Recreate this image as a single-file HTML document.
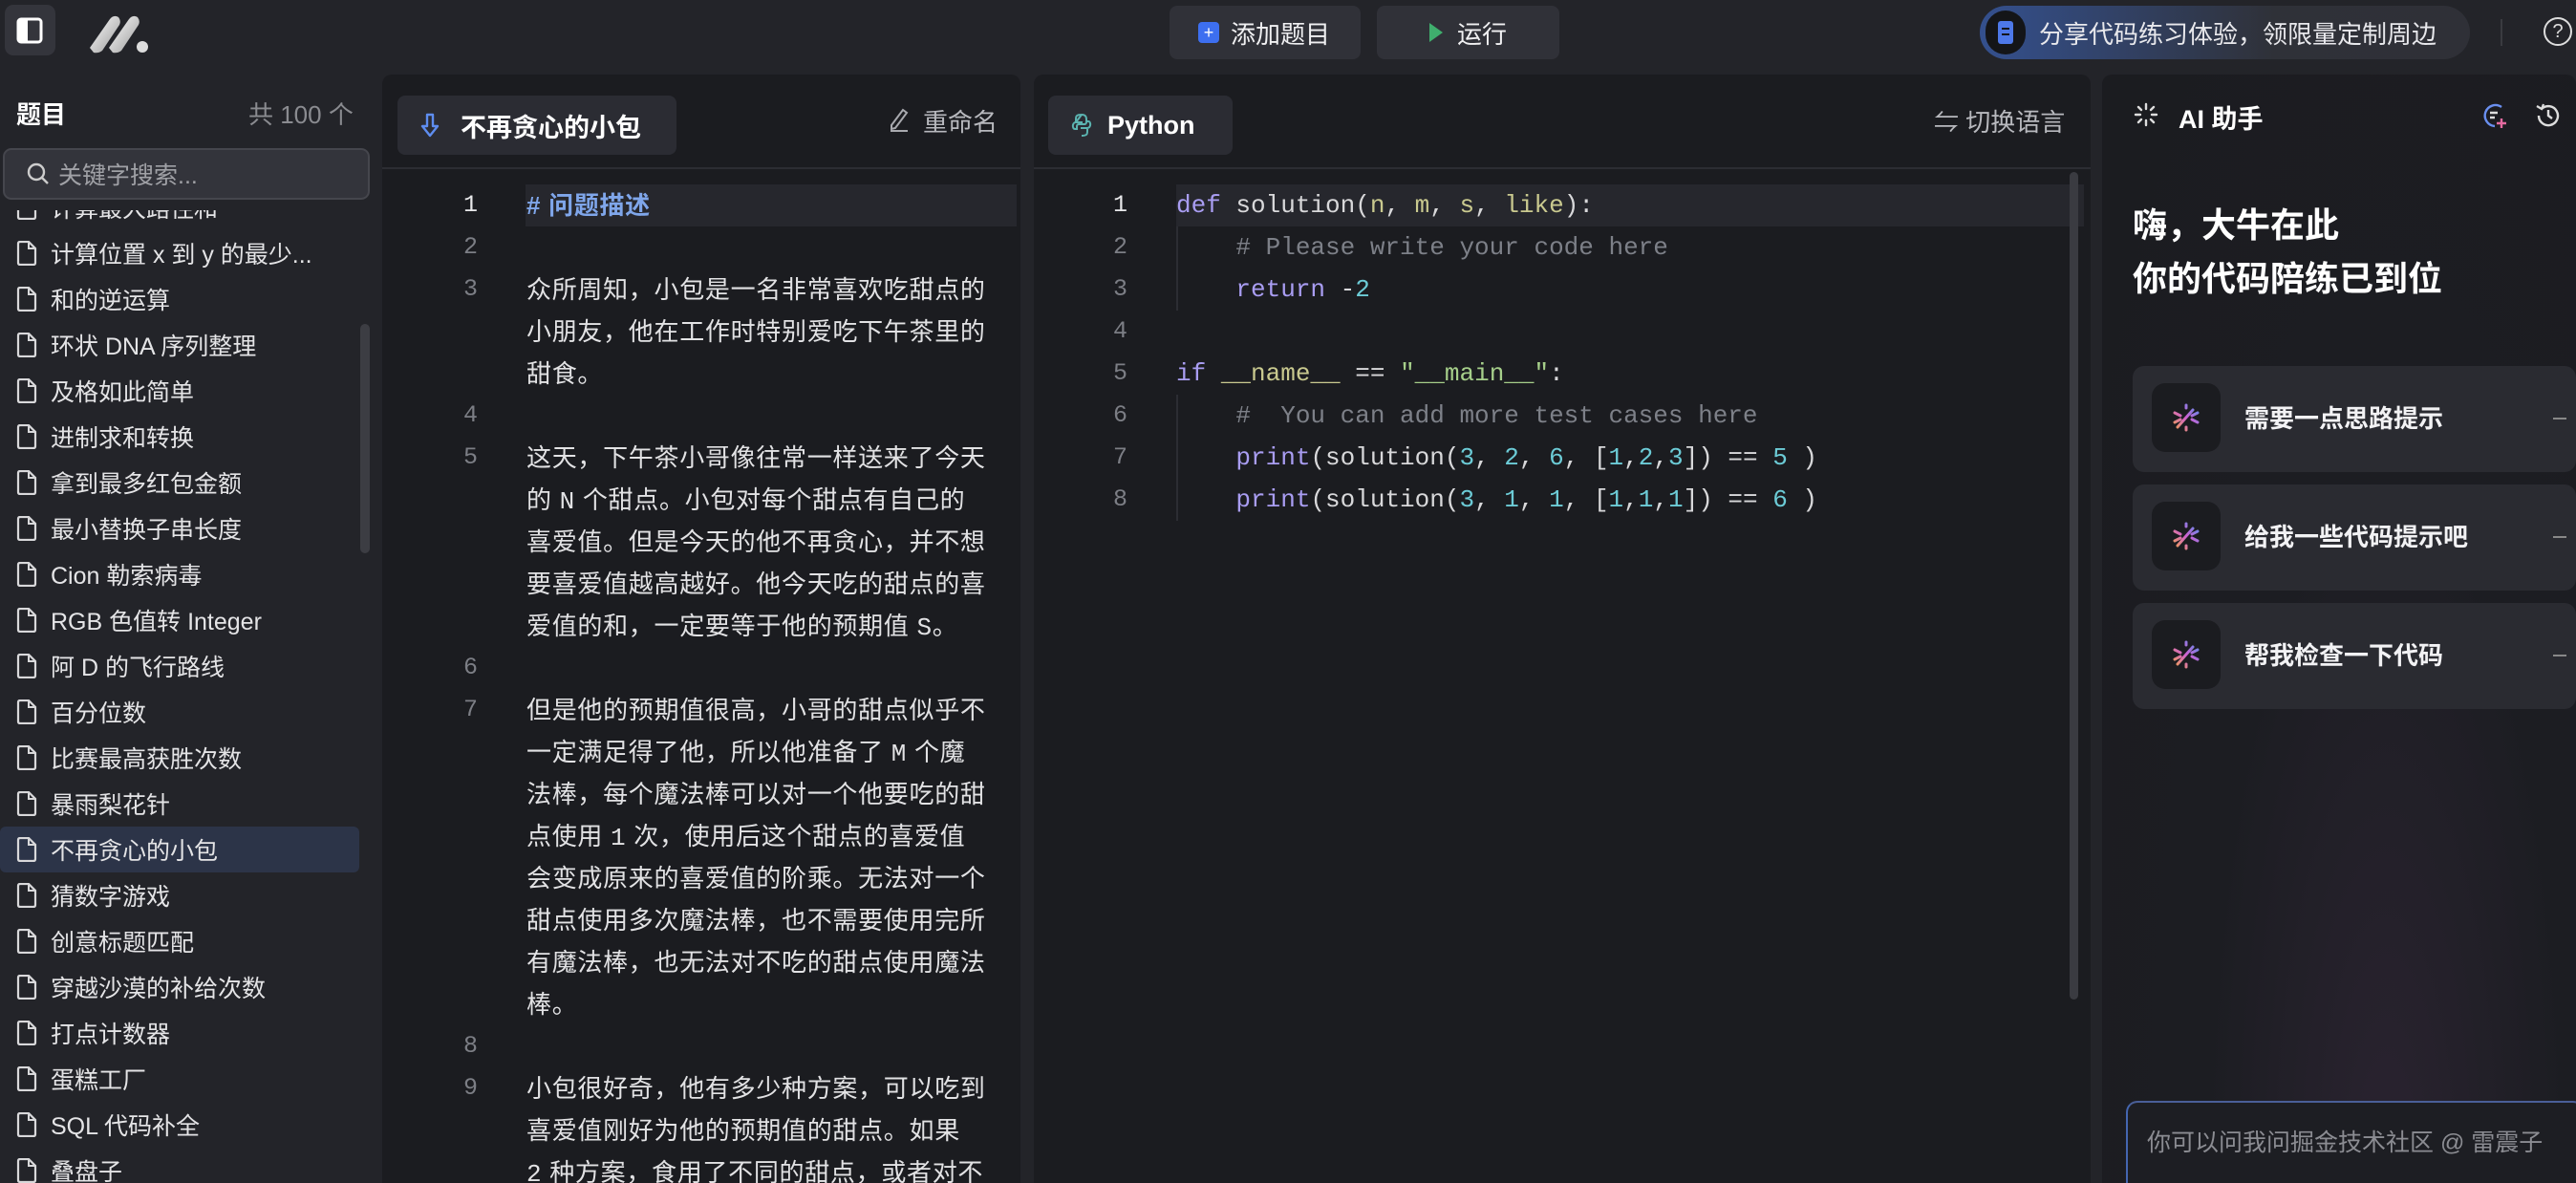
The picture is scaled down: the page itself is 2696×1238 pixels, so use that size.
<!DOCTYPE html>
<html><head><meta charset="utf-8"><style>
*{margin:0;padding:0;box-sizing:border-box}
html{width:2696px;height:1238px;overflow:hidden}
body{width:2696px;height:1238px;overflow:hidden;background:#232429;font-family:"Liberation Sans","Noto Sans CJK SC",sans-serif;color:#e6e6e8;position:relative}
.a{position:absolute}
.btn{position:absolute;background:#303138;border-radius:8px;display:flex;align-items:center;font-size:26px;color:#f0f0f2}
.panel{position:absolute;background:#1b1c20;border-radius:10px 10px 0 0;overflow:hidden}
.side-item{position:absolute;left:0;width:376px;height:48px;display:flex;align-items:center;font-size:25px;color:#e4e4e6;white-space:nowrap}
.side-item svg{margin-left:17px;margin-right:14px}
.ln{position:absolute;width:60px;text-align:right;font-family:"Liberation Mono",monospace;font-size:25px;color:#7c7e85;height:44px;line-height:44px}
.pt{position:absolute;left:551px;font-size:26px;letter-spacing:0.7px;color:#e2e2e4;height:44px;line-height:44px;white-space:nowrap}
.m{font-family:"Liberation Mono",monospace}
.cd{position:absolute;left:1231px;font-family:"Liberation Mono",monospace;font-size:26px;color:#d8d8da;height:44px;line-height:44px;white-space:pre}
.k{color:#a99df2}.p{color:#c9c98f}.n{color:#6ccbd6}.s{color:#a6cf8a}.c{color:#7d8088}
.card{position:absolute;left:2232px;width:480px;height:111px;background:#2a2b31;border-radius:12px}
.card .ic{position:absolute;left:20px;top:18px;width:72px;height:72px;background:#1b1c20;border-radius:14px;display:flex;align-items:center;justify-content:center}
.card .t{position:absolute;left:117px;top:0;line-height:111px;font-size:26px;font-weight:bold;color:#f2f2f4}
.card .d{position:absolute;right:10px;top:54px;width:14px;height:2px;background:#888}
</style></head><body>

<!-- top bar -->
<div class="a" style="left:5px;top:5px;width:53px;height:53px;background:#34353c;border-radius:9px"></div>
<svg class="a" style="left:17px;top:18px" width="28" height="28" viewBox="0 0 28 28"><rect x="2" y="2" width="24" height="24" rx="3" fill="none" stroke="#fff" stroke-width="3"/><rect x="2" y="2" width="10" height="24" fill="#fff"/></svg>
<svg class="a" style="left:92px;top:14px" width="64" height="42" viewBox="0 0 64 42"><defs><linearGradient id="lg" x1="0" y1="0" x2="1" y2="1"><stop offset="0" stop-color="#fff"/><stop offset="1" stop-color="#999"/></linearGradient></defs><path d="M2 36 L23 6 Q27 1 32 4 Q35 8 33 12 L15 39 Q11 42 6 41 Z" fill="url(#lg)"/><path d="M22 36 L43 6 Q47 1 52 4 Q55 8 53 12 L35 39 Q31 42 26 41 Z" fill="url(#lg)"/><circle cx="57" cy="35" r="6" fill="#ddd"/></svg>

<div class="btn" style="left:1224px;top:6px;width:200px;height:56px"><span style="margin-left:30px;width:22px;height:22px;background:#3d6ff0;border-radius:4px;color:#fff;font-size:18px;line-height:22px;text-align:center;display:inline-block">+</span><span style="margin-left:12px">添加题目</span></div>
<div class="btn" style="left:1441px;top:6px;width:191px;height:56px"><svg style="margin-left:54px" width="16" height="22" viewBox="0 0 16 22"><path d="M1 1 L15 11 L1 21 Z" fill="#3fae6d"/></svg><span style="margin-left:14px">运行</span></div>

<div class="a" style="left:2072px;top:6px;width:513px;height:56px;border-radius:28px;background:linear-gradient(90deg,#34508e,#2f3138 60%,#2f3037);display:flex;align-items:center">
<div style="margin-left:6px;width:42px;height:46px;border-radius:21px;background:#141518;display:flex;align-items:center;justify-content:center"><div style="width:16px;height:24px;background:#4d78e8;border-radius:3px;position:relative"><div style="position:absolute;left:4px;top:7px;width:8px;height:2px;background:#141518"></div><div style="position:absolute;left:4px;top:13px;width:8px;height:2px;background:#141518"></div></div></div>
<span style="margin-left:14px;font-size:26px;color:#e8e8ec">分享代码练习体验，领限量定制周边</span></div>
<div class="a" style="left:2617px;top:20px;width:2px;height:28px;background:#3a3b40"></div>
<div class="a" style="left:2662px;top:18px;width:30px;height:30px;border:2px solid #ddd;border-radius:50%;font-size:20px;text-align:center;line-height:27px;color:#ddd">?</div>

<!-- sidebar -->
<div class="a" style="left:17px;top:100px;font-size:26px;font-weight:bold;color:#fff">题目</div>
<div class="a" style="left:260px;top:100px;font-size:26px;color:#8a8b90">共 100 个</div>
<div class="a" style="left:3px;top:155px;width:384px;height:54px;background:#33343b;border:2px solid #45464d;border-radius:9px;display:flex;align-items:center">
<svg style="margin-left:22px" width="26" height="26" viewBox="0 0 26 26"><circle cx="11" cy="11" r="8" fill="none" stroke="#ccc" stroke-width="2.4"/><path d="M17 17 L23 23" stroke="#ccc" stroke-width="2.4"/></svg>
<span style="margin-left:8px;font-size:25px;color:#a0a1a6">关键字搜索...</span></div>

<div class="a" style="left:0;top:220px;width:390px;height:1018px;overflow:hidden">
<div class="a" style="left:0;top:645px;width:376px;height:48px;background:#2c3448;border-radius:6px"></div>
<div class="a" style="left:377px;top:119px;width:10px;height:240px;background:#3c3d43;border-radius:5px"></div>
<div id="list"></div>
</div>

<!-- problem panel -->
<div class="panel" style="left:400px;top:78px;width:668px;height:1160px"></div>
<div class="a" style="left:400px;top:175px;width:668px;height:2px;background:#2c2d33"></div>
<div class="a" style="left:416px;top:100px;width:292px;height:62px;background:#2b2c33;border-radius:8px;display:flex;align-items:center">
<svg style="margin-left:24px" width="20" height="26" viewBox="0 0 20 26"><path d="M7 2 H13 V14 H18 L10 24 L2 14 H7 Z" fill="none" stroke="#5e8df0" stroke-width="2.4" stroke-linejoin="round"/></svg>
<span style="margin-left:22px;font-size:27px;font-weight:bold;color:#fff">不再贪心的小包</span></div>
<svg class="a" style="left:930px;top:112px" width="22" height="26" viewBox="0 0 22 26"><path d="M3 19 L15 3 L19 6 L7 22 L3 23 Z M2 25 H20" fill="none" stroke="#a8a9ae" stroke-width="2"/></svg>
<div class="a" style="left:966px;top:108px;font-size:26px;color:#b8b9be">重命名</div>
<div class="a" style="left:550px;top:193px;width:514px;height:44px;background:#26272d"></div>

<!-- code panel -->
<div class="panel" style="left:1082px;top:78px;width:1106px;height:1160px"></div>
<div class="a" style="left:1082px;top:175px;width:1106px;height:2px;background:#2c2d33"></div>
<div class="a" style="left:1097px;top:100px;width:193px;height:62px;background:#2b2c33;border-radius:8px;display:flex;align-items:center">
<svg style="margin-left:22px" width="26" height="28" viewBox="0 0 26 28"><path d="M13 3 C7 3 7 5 7 8 V11 H14 M7 11 C3 11 3 18 6 18 H8 V15 C8 14 9 13 10 13 H16 C17 13 18 12 18 11 V8 C18 5 17 3 13 3 Z M13 25 C19 25 19 23 19 20 V17 H12 M19 17 C23 17 23 10 20 10 H18" fill="none" stroke="#5bb3b0" stroke-width="2"/></svg>
<span style="margin-left:14px;font-size:27px;font-weight:bold;color:#fff">Python</span></div>
<div class="a" style="left:2024px;top:108px;font-size:26px;color:#b8b9be">⇋ 切换语言</div>
<div class="a" style="left:1231px;top:193px;width:950px;height:44px;background:#26272d"></div>
<div class="a" style="left:1231px;top:237px;width:2px;height:88px;background:#2c2d33"></div>
<div class="a" style="left:1231px;top:413px;width:2px;height:132px;background:#2c2d33"></div>
<div class="a" style="left:2166px;top:180px;width:9px;height:866px;background:#3a3b41;border-radius:5px"></div>

<div class="ln" style="left:1120px;top:193px;color:#e8e8ea">1</div>
<div class="ln" style="left:1120px;top:237px">2</div>
<div class="ln" style="left:1120px;top:281px">3</div>
<div class="ln" style="left:1120px;top:325px">4</div>
<div class="ln" style="left:1120px;top:369px">5</div>
<div class="ln" style="left:1120px;top:413px">6</div>
<div class="ln" style="left:1120px;top:457px">7</div>
<div class="ln" style="left:1120px;top:501px">8</div>
<div class="cd" style="top:193px"><span class="k">def</span> solution(<span class="p">n</span>, <span class="p">m</span>, <span class="p">s</span>, <span class="p">like</span>):</div>
<div class="cd" style="top:237px"><span class="c">    # Please write your code here</span></div>
<div class="cd" style="top:281px">    <span class="k">return</span> -<span class="n">2</span></div>
<div class="cd" style="top:369px"><span class="k">if</span> <span class="p">__name__</span> == <span class="s">"__main__"</span>:</div>
<div class="cd" style="top:413px"><span class="c">    #  You can add more test cases here</span></div>
<div class="cd" style="top:457px">    <span class="k">print</span>(solution(<span class="n">3</span>, <span class="n">2</span>, <span class="n">6</span>, [<span class="n">1</span>,<span class="n">2</span>,<span class="n">3</span>]) == <span class="n">5</span> )</div>
<div class="cd" style="top:501px">    <span class="k">print</span>(solution(<span class="n">3</span>, <span class="n">1</span>, <span class="n">1</span>, [<span class="n">1</span>,<span class="n">1</span>,<span class="n">1</span>]) == <span class="n">6</span> )</div>

<div id="prob"></div>

<!-- AI panel -->
<div class="panel" style="left:2200px;top:78px;width:496px;height:1160px;background:radial-gradient(ellipse at 60% 100%,#2a2330 0%,#1c1d22 45%,#1b1c20 100%)"></div>
<svg class="a" style="left:2232px;top:106px" width="28" height="28" viewBox="0 0 28 28"><g stroke="#ddd" stroke-width="2.4" stroke-linecap="round"><path d="M14 3 V8 M14 20 V25 M3 14 H8 M20 14 H25 M6 6 L9 9 M19 19 L22 22 M22 6 L19 9 M9 19 L6 22"/></g></svg>
<div class="a" style="left:2280px;top:103px;font-size:27px;font-weight:bold;color:#fff">AI 助手</div>
<svg class="a" style="left:2596px;top:106px" width="30" height="30" viewBox="0 0 30 30"><path d="M22 6 A11 11 0 1 0 15 26" fill="none" stroke="#6a8ff0" stroke-width="2.4"/><path d="M10 12 H18 M10 17 H15" stroke="#ddd" stroke-width="2.4"/><path d="M22 18 V28 M17 23 H27" stroke="#e46aa0" stroke-width="2.4"/></svg>
<svg class="a" style="left:2652px;top:106px" width="30" height="30" viewBox="0 0 30 30"><path d="M5 15 A10 10 0 1 0 8 8" fill="none" stroke="#ddd" stroke-width="2.4"/><path d="M3 5 L8 8 L10 3" fill="none" stroke="#ddd" stroke-width="2.2"/><path d="M15 9 V15 L19 18" fill="none" stroke="#ddd" stroke-width="2.4"/></svg>
<div class="a" style="left:2232px;top:208px;font-size:36px;font-weight:bold;color:#fff;line-height:56px">嗨，大牛在此<br>你的代码陪练已到位</div>

<div class="card" style="top:383px;width:464px"><div class="ic">SPARK</div><div class="t">需要一点思路提示</div><div class="d"></div></div>
<div class="card" style="top:507px;width:464px"><div class="ic">SPARK</div><div class="t">给我一些代码提示吧</div><div class="d"></div></div>
<div class="card" style="top:631px;width:464px"><div class="ic">SPARK</div><div class="t">帮我检查一下代码</div><div class="d"></div></div>

<div class="a" style="left:2225px;top:1152px;width:480px;height:100px;border-radius:12px;border:2px solid #44464e;border-left-color:#4466b0;border-top-color:#4a5f98;background:#1d1e23"></div>
<div class="a" style="left:2247px;top:1176px;font-size:25px;color:#8b8c92">你可以问我问掘金技术社区 @ 雷震子</div>

<script>
var items=["计算最大路径和","计算位置 x 到 y 的最少...","和的逆运算","环状 DNA 序列整理","及格如此简单","进制求和转换","拿到最多红包金额","最小替换子串长度","Cion 勒索病毒","RGB 色值转 Integer","阿 D 的飞行路线","百分位数","比赛最高获胜次数","暴雨梨花针","不再贪心的小包","猜数字游戏","创意标题匹配","穿越沙漠的补给次数","打点计数器","蛋糕工厂","SQL 代码补全","叠盘子"];
var icon='<svg width="22" height="26" viewBox="0 0 22 26"><path d="M2 3 Q2 1 4 1 H13 L20 8 V23 Q20 25 18 25 H4 Q2 25 2 23 Z" fill="none" stroke="#d8d8da" stroke-width="2.2"/><path d="M13 1 V8 H20" fill="none" stroke="#d8d8da" stroke-width="2"/></svg>';
var h='';items.forEach(function(t,i){h+='<div class="side-item" style="top:'+(-27+i*48)+'px">'+icon+'<span>'+t+'</span></div>';});
document.getElementById('list').innerHTML=h;
var sp='<svg width="34" height="34" viewBox="0 0 34 34"><defs><linearGradient id="gg" x1="0" y1="1" x2="1" y2="0"><stop offset="0" stop-color="#f0a050"/><stop offset="0.5" stop-color="#d060d0"/><stop offset="1" stop-color="#5a8ff0"/></linearGradient></defs><g stroke="url(#gg)" stroke-width="3" stroke-linecap="round"><path d="M17 4 V7 M17 27 V30 M5 12 L11 15 M5 22 L11 19 M23 15 L29 12 M23 19 L29 22 M8 27 L24 9"/></g></svg>';
document.querySelectorAll('.ic').forEach(function(e){e.innerHTML=sp;});
var P=[["1","<span style='color:#7fa6ea;font-weight:bold'># 问题描述</span>"],["2",""],["3","众所周知，小包是一名非常喜欢吃甜点的"],["","小朋友，他在工作时特别爱吃下午茶里的"],["","甜食。"],["4",""],["5","这天，下午茶小哥像往常一样送来了今天"],["","的 <span class='m'>N</span> 个甜点。小包对每个甜点有自己的"],["","喜爱值。但是今天的他不再贪心，并不想"],["","要喜爱值越高越好。他今天吃的甜点的喜"],["","爱值的和，一定要等于他的预期值 <span class='m'>S</span>。"],["6",""],["7","但是他的预期值很高，小哥的甜点似乎不"],["","一定满足得了他，所以他准备了 <span class='m'>M</span> 个魔"],["","法棒，每个魔法棒可以对一个他要吃的甜"],["","点使用 <span class='m'>1</span> 次，使用后这个甜点的喜爱值"],["","会变成原来的喜爱值的阶乘。无法对一个"],["","甜点使用多次魔法棒，也不需要使用完所"],["","有魔法棒，也无法对不吃的甜点使用魔法"],["","棒。"],["8",""],["9","小包很好奇，他有多少种方案，可以吃到"],["","喜爱值刚好为他的预期值的甜点。如果"],["","<span class='m'>2</span> 种方案，食用了不同的甜点，或者对不"]];
var q='';P.forEach(function(r,i){var y=193+i*44;if(r[0])q+='<div class="ln" style="left:440px;top:'+y+'px;'+(r[0]=="1"?'color:#e8e8ea':'')+'">'+r[0]+'</div>';q+='<div class="pt" style="top:'+y+'px">'+r[1]+'</div>';});
document.getElementById('prob').innerHTML=q;
</script>
</body></html>
